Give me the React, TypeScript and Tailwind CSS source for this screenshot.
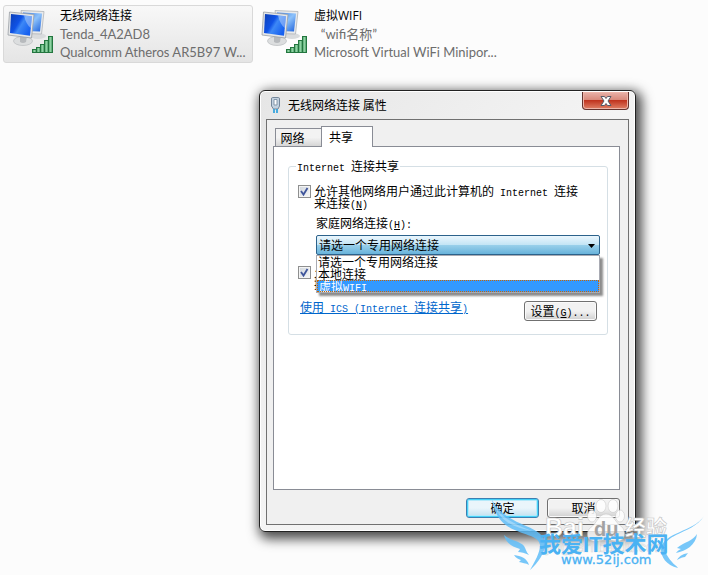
import React from 'react';

interface AdapterProps {
    name: string;
    network: string;
    device: string;
    selected?: boolean;
}

const Half: React.FC<{ children: React.ReactNode }> = ({ children }) => (
    <span className="font-['Liberation_Mono',monospace] text-[10px] leading-[0] whitespace-pre">{children}</span>
);

const AdapterIcon: React.FC<{ id: string }> = ({ id }) => (
    <svg width="48" height="48" viewBox="0 0 48 48" className="shrink-0 self-start" aria-hidden="true">
        <defs>
            <linearGradient id={`${id}-screen`} x1="0" y1="0" x2="1" y2="0.6">
                <stop offset="0" stopColor="#0d3fb4" />
                <stop offset="0.45" stopColor="#0f52e6" />
                <stop offset="0.6" stopColor="#3d88f6" />
                <stop offset="1" stopColor="#1660f0" />
            </linearGradient>
            <linearGradient id={`${id}-back`} x1="0" y1="0" x2="1" y2="1">
                <stop offset="0" stopColor="#2f76e8" />
                <stop offset="0.5" stopColor="#8dc2fa" />
                <stop offset="1" stopColor="#1c60dc" />
            </linearGradient>
            <linearGradient id={`${id}-bar`} x1="0" y1="0" x2="1" y2="0">
                <stop offset="0" stopColor="#4da06a" />
                <stop offset="0.5" stopColor="#8ed3a2" />
                <stop offset="1" stopColor="#3d8f5c" />
            </linearGradient>
        </defs>
        <ellipse cx="32" cy="30" rx="8" ry="3" fill="#d9dbdd" />
        <path d="M15 4.500 L38 5.500 L35.500 28 L18 27.500Z" fill="#e8eaec" stroke="#b0b4b8" strokeWidth="0.800" />
        <path d="M17 6.500 L36 7.500 L34 25.500 L19 25Z" fill={`url(#${id}-back)`} />
        <ellipse cx="17" cy="35" rx="9.500" ry="4.500" fill="#dcdedf" stroke="#b9bcbf" strokeWidth="0.700" />
        <path d="M14 29 L21 30 L20 36 Q17 38 14 36Z" fill="#b7babd" />
        <path d="M3.500 6 L28 8.500 L25.500 32 L2 29Z" fill="#e4e6e8" stroke="#9a9fa4" strokeWidth="0.800" />
        <path d="M5 8 L26 10.200 L24 29.800 L4 27Z" fill={`url(#${id}-screen)`} />
        <path d="M18 9.400 L26 10.200 L24.700 22 Q20 18 18 9.400Z" fill="#fff" opacity="0.350" />
        <g fill={`url(#${id}-bar)`} stroke="#23763f">
            <rect x="26.500" y="43.500" width="4" height="3" />
            <rect x="30.500" y="41.500" width="4" height="5" />
            <rect x="34.500" y="38.500" width="4" height="8" />
            <rect x="38.500" y="34.500" width="4" height="12" />
            <rect x="42.500" y="30.500" width="4" height="16" />
        </g>
    </svg>
);

const Adapter: React.FC<AdapterProps> = ({ name, network, device, selected }) => (
    <button
        type="button"
        className={`flex h-[58px] w-[250px] items-center gap-[6px] rounded-[3px] border pl-[2px] text-left text-[13px] leading-[18px] ${
            selected ? 'border-[#d9d9d9] bg-linear-to-b from-[#f8f8f8] to-[#e5e5e5]' : 'border-transparent'
        }`}
    >
        <AdapterIcon id={selected ? 'wireless' : 'virtual'} />
        <span className="min-w-0 flex-1 whitespace-pre font-['Lato','Noto_Sans_CJK_SC',sans-serif] text-[#6d6d6d]">
            <span className="block font-['Open_Sans','Noto_Sans_CJK_SC',sans-serif] text-xs leading-[18px] text-black">{name}</span>
            <span className="block">{network}</span>
            <span className="block">{device}</span>
        </span>
    </button>
);

const CheckBox: React.FC<{ id: string }> = ({ id }) => (
    <span className="relative h-[13px] w-[13px] shrink-0">
        <input
            id={id}
            type="checkbox"
            defaultChecked
            className="block h-[13px] w-[13px] appearance-none border border-[#8e8f8f] bg-linear-to-br from-[#cfd5dc] to-[#f8f8f8] shadow-[inset_0_0_0_1px_#f4f4f4]"
        />
        <svg viewBox="0 0 13 13" className="pointer-events-none absolute inset-0 h-[13px] w-[13px]" aria-hidden="true">
            <path d="M3 6 L5.500 9.500 L9.500 3" fill="none" stroke="#3f559b" strokeWidth="1.800" />
        </svg>
    </span>
);

const Watermark: React.FC = () => (
    <div className="pointer-events-none absolute top-[492px] left-[488px] h-[83px] w-[220px]">
        <svg viewBox="0 0 220 83" className="h-full w-full" aria-hidden="true">
            <g fill="#fff" stroke="#c4c4c4" strokeWidth="0.600" opacity="0.850">
                <ellipse cx="104" cy="24" rx="4.500" ry="6" />
                <ellipse cx="113" cy="14" rx="5" ry="6.500" />
                <ellipse cx="125" cy="14" rx="5" ry="6.500" />
                <ellipse cx="132" cy="24" rx="4.500" ry="6" />
                <path d="M118 22 C126 22 127 31 134 35 C140 42 135 51 127 49 Q118 47 110 49 C101 51 96 43 102 36 C109 32 110 22 118 22Z" />
            </g>
            <g className="font-['Liberation_Sans','Noto_Sans_CJK_SC',sans-serif]" stroke="#c4c4c4" strokeWidth="0.600">
                <text x="57" y="44" fontSize="25" fill="#fff" fontWeight="bold">Bai</text>
                <text x="106" y="44" fontSize="20" fill="#a2a2a2" stroke="none" fontWeight="bold">du</text>
                <text x="137" y="43" fontSize="21" fill="#fff" fontWeight="bold">经验</text>
                <text x="58" y="60" fontSize="15" fill="#fff" opacity="0.600">jingyan.baidu.com</text>
            </g>
            <g fill="#5fbdf8" fillOpacity="0.850">
                <path d="M4 8 C12 22 24 28 38 34 C50 39 56 43 57 52 C57 61 50 71 42 78 C47 69 52 61 52 53 C51 46 43 44 34 41 C20 36 8 30 4 8Z" />
                <path d="M4 8 C11 25 24 31 44 39 C26 36 10 29 4 8Z" fill="#fff" fillOpacity="0.300" />
                <path d="M16 43 C23 49 32 49 36 54 C38 57 38 60 41 63 C37 61 33 60 30 60 L32 57 C24 55 18 51 16 43Z" />
                <path d="M26 63 C33 64 39 66 41 73 C38 71 34 71 31 70 L33 68 C30 67 28 66 26 63Z" />
                <path d="M216 24 C210 34 198 38 188 43 C176 49 172 56 184 70 C185 72 189 74 190 76 C178 73 173 65 173 57 C175 40 206 40 216 24Z" />
                <path d="M209 42 C205 49 196 50 189 56 L193 57 C190 58 189 60 188 61 C198 59 208 53 209 42Z" />
                <path d="M200 61 C196 62 192 63 189 68 Q194 65 197 65Z" />
            </g>
            <g fill="#4ab2f3">
                <text x="51" y="60" fontSize="22" className="font-['Liberation_Sans','Noto_Sans_CJK_SC',sans-serif] font-bold">我爱IT技术网</text>
                <text x="73" y="72" fontSize="13" stroke="#4ab2f3" strokeWidth="0.300" className="font-['DejaVu_Sans',sans-serif]">www.52ij.com</text>
            </g>
        </svg>
    </div>
);

const PropertiesDialog: React.FC = () => (
    <section
        aria-label="无线网络连接 属性"
        className="absolute top-[90px] left-[259px] rounded-[6px] border border-[#222] bg-linear-to-br from-[#e6e6e6] via-[#f4f4f4] to-[#ececec] px-[6px] pt-px pb-[6px] shadow-[inset_0_0_0_1px_#fff,3px_4px_12px_3px_rgba(0,0,0,0.7)]"
    >
        <header className="flex h-[27px] items-start justify-between">
            <div className="flex items-center gap-[5px] pt-[3px] pl-[3px]">
                <svg width="14" height="18" viewBox="0 0 14 18" aria-hidden="true">
                    <path d="M3.500 1.500 H9.500 Q10.500 1.500 10.500 3 V10 L9 13 H4.500 L2.500 10 V3 Q2.500 1.500 3.500 1.500Z" fill="#c3d2e0" stroke="#74879b" />
                    <path d="M5 3.500 H8 V9 H5Z" fill="#fff" stroke="#8497aa" />
                    <path d="M5 13 V17 M8 13 V17" stroke="#38a5dd" strokeWidth="1.800" />
                </svg>
                <h1 className="font-['Noto_Sans_CJK_SC',sans-serif] text-xs leading-[20px]">无线网络连接 属性</h1>
            </div>
            <button
                type="button"
                aria-label="关闭"
                className="flex h-[18px] w-[47px] items-center justify-center rounded-b-[4px] border border-t-0 border-[#64332e] bg-[linear-gradient(#e9b3aa,#d98a7c_45%,#c0341f_50%,#e08066)] shadow-[inset_0_0_0_1px_#eeb5a9]"
            >
                <svg width="12" height="10" viewBox="0 0 12 10" aria-hidden="true">
                    <path d="M1 .5 H4.500 L6 2.500 L7.500 .5 H11 L8 5 L11 9.500 H7.500 L6 7.500 L4.500 9.500 H1 L4 5Z" fill="#fff" stroke="#565a68" />
                </svg>
            </button>
        </header>

        <div className="border border-[#707070] bg-[#f0f0f0] py-[6px] pr-[8px] pl-[6px] font-['Noto_Sans_CJK_SC',sans-serif] text-xs leading-[12px] text-black">
            <div role="tablist" className="flex items-end pl-[2px]">
                <button type="button" role="tab" aria-selected="false" className="h-[18px] w-[46px] border border-r-0 border-b-0 border-[#898c95] bg-linear-to-b from-[#f3f3f3] from-50% to-[#d5d5d5] pr-3">
                    网络
                </button>
                <button type="button" role="tab" aria-selected="true" className="relative -mb-px h-[21px] w-[52px] border border-b-0 border-[#898c95] bg-white pr-3 pb-px">
                    共享
                </button>
            </div>

            <div role="tabpanel" className="h-[344px] border border-[#898c95] bg-white pt-[13px] pr-[11px] pl-[14px]">
                <fieldset className="h-[175px] w-[320px] rounded-[3px] border border-[#d5dfe5] pr-[7px] pl-[9px]">
                    <legend className="-ml-[2px] px-px leading-[12px]">
                        <Half>Internet </Half>连接共享
                    </legend>
                    <div className="flex gap-[3px] pt-[13px]">
                        <CheckBox id="allow-share" />
                        <label htmlFor="allow-share" className="whitespace-nowrap">
                            允许其他网络用户通过此计算机的<Half> Internet </Half>连接
                            <br />
                            来连接<Half>(<u>N</u>)</Half>
                        </label>
                    </div>
                    <label htmlFor="home-network" className="mt-2 block pl-[18px]">
                        家庭网络连接<Half>(<u>H</u>):</Half>
                    </label>
                    <div className="relative mt-[6px] ml-[18px]">
                        <select
                            id="home-network"
                            className="block h-[20px] w-full appearance-none rounded-[2px] border border-[#2c628b] bg-[linear-gradient(#eaf6fd,#c4e5f5_48%,#98cfea_52%,#68b3db)] pl-[2px] text-xs leading-[18px]"
                        >
                            <option>请选一个专用网络连接</option>
                            <option>本地连接</option>
                            <option>虚拟WIFI</option>
                        </select>
                        <svg width="7" height="4" viewBox="0 0 7 4" className="pointer-events-none absolute top-[9px] right-[5px]" aria-hidden="true">
                            <path d="M0 0 H7 L3.500 4Z" fill="#000" />
                        </svg>
                        <ul role="listbox" className="absolute top-[20px] left-0 z-10 w-full border border-[#a9abb3] bg-white shadow-[3px_3px_2px_rgba(0,0,0,0.45)]">
                            <li role="option" aria-selected="false" className="pl-px">请选一个专用网络连接</li>
                            <li role="option" aria-selected="false" className="pl-px">本地连接</li>
                            <li role="option" aria-selected="true" className="bg-[#3399ff] pl-[2px] text-white outline-1 -outline-offset-1 outline-dotted outline-[#cc6600]">
                                虚拟<Half>WIFI</Half>
                            </li>
                        </ul>
                    </div>
                    <div className="flex gap-[3px] pt-[11px]">
                        <CheckBox id="allow-control" />
                        <label htmlFor="allow-control" className="whitespace-nowrap">
                            允
                            <br />
                            接
                        </label>
                    </div>
                    <div className="flex items-start justify-between pt-[11px] pr-[3px] pl-[2px]">
                        <a href="#ics" className="text-[#0066cc] underline">
                            使用<Half> ICS (Internet </Half>连接共享<Half>)</Half>
                        </a>
                        <button type="button" className="h-[20px] w-[73px] rounded-[3px] border border-[#707070] bg-linear-to-b from-[#f2f2f2] from-50% to-[#d0d0d0] shadow-[inset_0_0_0_1px_#fafafa]">
                            设置<Half>(<u>G</u>)...</Half>
                        </button>
                    </div>
                </fieldset>
            </div>

            <footer className="flex justify-end gap-2 pt-2">
                <button type="button" className="h-[20px] w-[73px] rounded-[3px] border border-[#3c7fb1] bg-linear-to-b from-[#eaf5fb] from-50% to-[#bfdfee] shadow-[inset_0_0_0_1px_#46d2f8,inset_0_0_0_2px_#b4e9fa]">
                    确定
                </button>
                <button type="button" className="h-[20px] w-[73px] rounded-[3px] border border-[#707070] bg-linear-to-b from-[#f2f2f2] from-50% to-[#d0d0d0] shadow-[inset_0_0_0_1px_#fafafa]">
                    取消
                </button>
            </footer>
        </div>
    </section>
);

export default function App() {
    return (
        <main className="relative min-h-screen overflow-hidden bg-[#fcfcfc]">
            <div className="flex flex-wrap gap-1 pt-[5px] pl-[3px]">
                <Adapter name="无线网络连接" network="Tenda_4A2AD8" device="Qualcomm Atheros AR5B97 W..." selected />
                <Adapter name="虚拟WIFI" network="  “wifi名称”" device="Microsoft Virtual WiFi Minipor..." />
            </div>
            <PropertiesDialog />
            <Watermark />
        </main>
    );
}
